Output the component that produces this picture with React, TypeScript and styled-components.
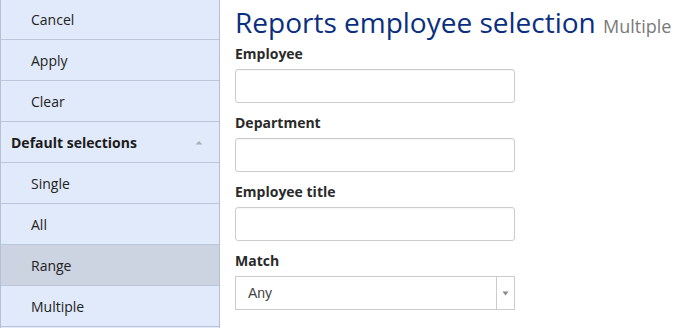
import React from "react";
import styled, { createGlobalStyle } from "styled-components";

const Global = createGlobalStyle`
  html, body { margin: 0; padding: 0; background: #ffffff; }
  body { font-family: "Open Sans", "Liberation Sans", sans-serif; overflow: hidden; }
  * { box-sizing: border-box; }
`;

const Page = styled.div`
  display: flex;
  align-items: flex-start;
  width: 691px;
  height: 328px;
  overflow: hidden;
`;

const Sidebar = styled.nav`
  width: 220px;
  flex: none;
  margin-top: -2px;
  background: #e1eafa;
  border-left: 1px solid #b3c0d8;
  border-right: 1px solid #b3c0d8;
  display: flex;
  flex-direction: column;
`;

const Item = styled.div<{ $active?: boolean }>`
  height: 41px;
  display: flex;
  align-items: center;
  padding-left: 30px;
  font-size: 14px;
  color: #222;
  background: ${(p) => (p.$active ? "#ccd3e1" : "transparent")};
  border-top: 1px solid #bcc7db;
`;

const Header = styled.div`
  height: 41px;
  display: flex;
  align-items: center;
  justify-content: space-between;
  padding: 0 16px 0 10px;
  font-size: 14px;
  font-weight: 700;
  color: #1b1b1b;
  border-top: 1px solid #bcc7db;
`;

const LastLine = styled.div`
  border-top: 1px solid #bcc7db;
  height: 4px;
`;

const Main = styled.main`
  padding-left: 15px;
  display: flex;
  flex-direction: column;
  white-space: nowrap;
`;

const Title = styled.h1`
  margin: 0;
  font-size: 28px;
  line-height: 44px;
  font-weight: 400;
  color: #0b2f80;
`;

const Sub = styled.small`
  font-size: 18px;
  line-height: 1;
  color: #7a7a7a;
`;

const Label = styled.label`
  display: block;
  font-size: 14px;
  line-height: 20px;
  font-weight: 700;
  color: #2a2a2a;
  margin: 0 0 5px 0;
`;

const Field = styled.div`
  display: flex;
  flex-direction: column;
  margin-bottom: 10px;
`;

const Input = styled.input`
  width: 280px;
  height: 34px;
  border: 1px solid #cccccc;
  border-radius: 3px;
  box-shadow: inset 0 1px 1px rgba(0, 0, 0, 0.04);
  background: #fff;
  font-family: inherit;
  font-size: 14px;
  padding: 0 12px;
  outline: none;
`;

const Select = styled.div`
  width: 280px;
  height: 34px;
  border: 1px solid #cccccc;
  display: flex;
  align-items: stretch;
  background: #fff;
`;

const SelectValue = styled.div`
  flex: 1;
  display: flex;
  align-items: center;
  padding-left: 12px;
  font-family: "Liberation Sans", Arial, sans-serif;
  font-size: 14px;
  color: #444;
`;

const Arrow = styled.div`
  width: 18px;
  border-left: 1px solid #cccccc;
  display: flex;
  align-items: center;
  justify-content: center;
`;

const ChevronUp = () => (
  <svg width="8" height="5" viewBox="0 0 8 5">
    <path d="M0.5 4.5 L4 1 L7.5 4.5 Z" fill="#a9afb9" />
  </svg>
);

const Caret = () => (
  <svg width="7" height="5" viewBox="0 0 7 5">
    <path d="M0.5 0.5 H6.5 L3.5 4.5 Z" fill="#888" />
  </svg>
);

export default function App() {
  return (
    <>
      <Global />
      <Page>
        <Sidebar>
          <Item>Cancel</Item>
          <Item>Apply</Item>
          <Item>Clear</Item>
          <Header>
            <span>Default selections</span>
            <ChevronUp />
          </Header>
          <Item>Single</Item>
          <Item>All</Item>
          <Item $active>Range</Item>
          <Item>Multiple</Item>
          <LastLine />
        </Sidebar>
        <Main>
          <Title>
            Reports employee selection <Sub>Multiple</Sub>
          </Title>
          <Field>
            <Label>Employee</Label>
            <Input />
          </Field>
          <Field>
            <Label>Department</Label>
            <Input />
          </Field>
          <Field>
            <Label>Employee title</Label>
            <Input />
          </Field>
          <Field>
            <Label>Match</Label>
            <Select>
              <SelectValue>Any</SelectValue>
              <Arrow>
                <Caret />
              </Arrow>
            </Select>
          </Field>
        </Main>
      </Page>
    </>
  );
}
